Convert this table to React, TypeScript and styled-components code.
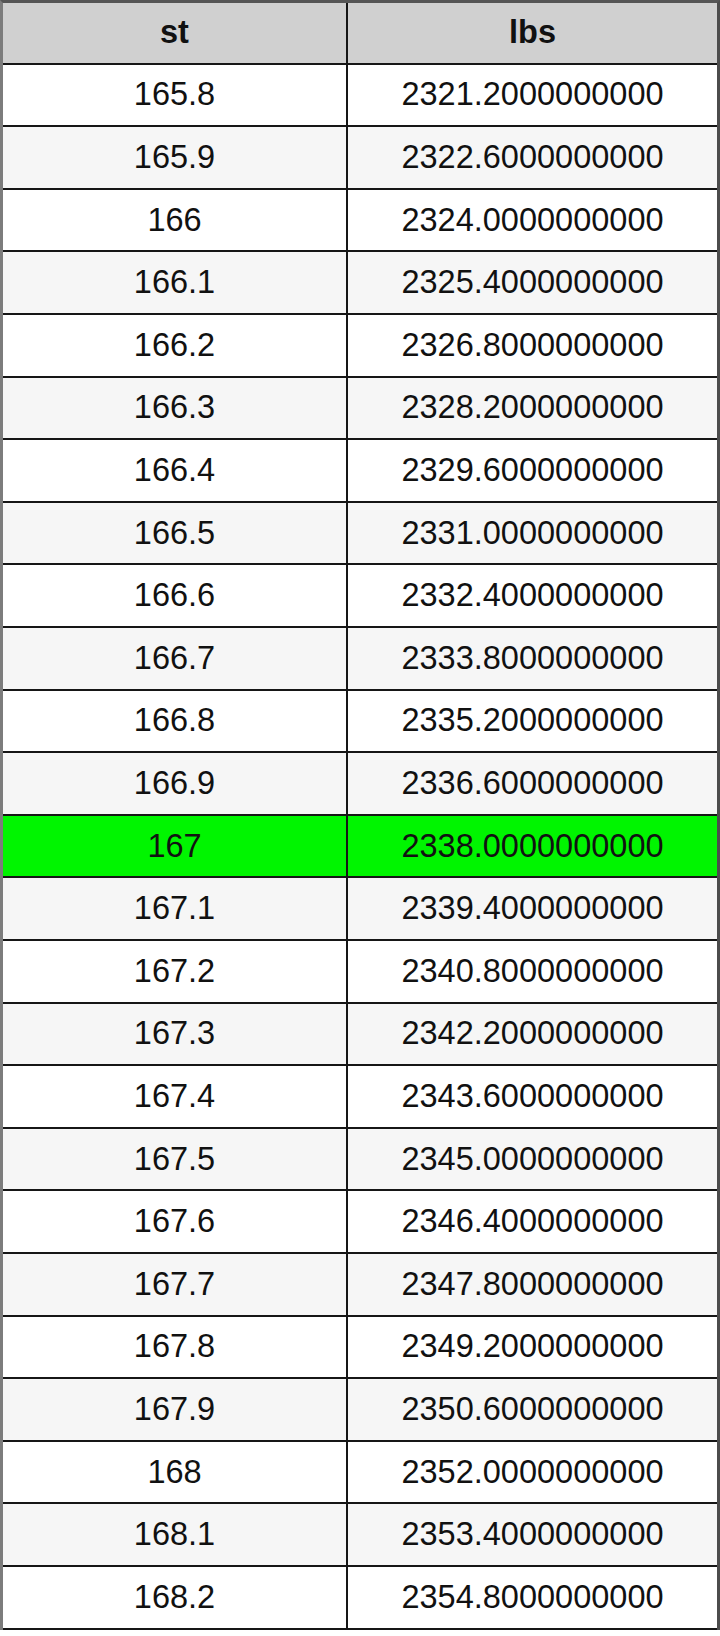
import styled, { createGlobalStyle } from 'styled-components';

const GlobalStyle = createGlobalStyle`
    html, body {
        margin: 0;
        padding: 0;
        background: #ffffff;
    }
`;

const Table = styled.div`
    box-sizing: border-box;
    width: 720px;
    border-top: 3px solid #555555;
    border-left: 3px solid #7c7c7c;
    border-right: 3px solid #4c4c4c;
    font-family: 'Liberation Sans', Arial, sans-serif;
    color: #111111;
`;

const Row = styled.div<{ $tone: 'head' | 'white' | 'light' | 'green' }>`
    box-sizing: border-box;
    display: grid;
    grid-template-columns: 345px 1fr;
    height: ${({ $tone }) => ($tone === 'head' ? '61.7px' : '62.6px')};
    border-bottom: 2px solid #161616;
    background: ${({ $tone }) =>
        $tone === 'head' ? '#d0d0d0' : $tone === 'green' ? '#00f500' : $tone === 'light' ? '#f6f6f6' : '#ffffff'};
`;

const Cell = styled.div<{ $bold?: boolean }>`
    display: flex;
    align-items: center;
    justify-content: center;
    font-size: 32.5px;
    font-weight: ${({ $bold }) => ($bold ? 700 : 400)};

    &:first-child {
        border-right: 2px solid #161616;
    }
`;

const rows = Array.from({ length: 25 }, (_, i) => {
    const st = Math.round((165.8 + i * 0.1) * 10) / 10;
    const lbs = (st * 14).toFixed(10);
    return { st: String(st), lbs };
});

export default function App() {
    return (
        <>
            <GlobalStyle />
            <Table>
                <Row $tone="head">
                    <Cell $bold>st</Cell>
                    <Cell $bold>lbs</Cell>
                </Row>
                {rows.map((r, i) => (
                    <Row key={r.st} $tone={r.st === '167' ? 'green' : i % 2 === 0 ? 'white' : 'light'}>
                        <Cell>{r.st}</Cell>
                        <Cell>{r.lbs}</Cell>
                    </Row>
                ))}
            </Table>
        </>
    );
}
